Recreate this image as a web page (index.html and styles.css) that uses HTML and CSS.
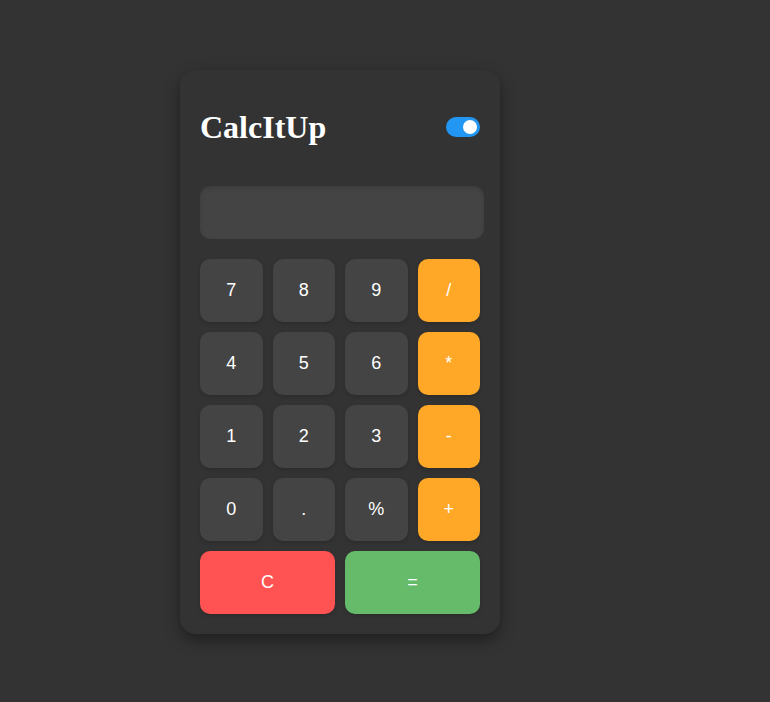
FILE: index.html
```html
<!DOCTYPE html>
<html lang="en">
<head>
<meta charset="utf-8">
<title>CalcItUp</title>
<link rel="stylesheet" href="styles.css">
</head>
<body>
<div class="calculator">
  <div class="header">
    <h1 class="title">CalcItUp</h1>
    <label class="toggle"><span class="knob"></span></label>
  </div>
  <div class="display"></div>
  <div class="keys">
    <button class="key">7</button>
    <button class="key">8</button>
    <button class="key">9</button>
    <button class="key op">/</button>
    <button class="key">4</button>
    <button class="key">5</button>
    <button class="key">6</button>
    <button class="key op">*</button>
    <button class="key">1</button>
    <button class="key">2</button>
    <button class="key">3</button>
    <button class="key op">-</button>
    <button class="key">0</button>
    <button class="key">.</button>
    <button class="key">%</button>
    <button class="key op">+</button>
    <button class="key wide clear">C</button>
    <button class="key wide equals">=</button>
  </div>
</div>
</body>
</html>
```
FILE: styles.css
```css
html {
  background: #333333;
}
body {
  margin: 0;
  padding: 70px 0 60px 180px;
  font-family: "Liberation Sans", Arial, sans-serif;
}
.calculator {
  width: 280px;
  padding: 20px;
  background: #333333;
  border-radius: 16px;
  box-shadow: 0 6px 16px rgba(0, 0, 0, 0.4);
}
.header {
  display: flex;
  justify-content: space-between;
  align-items: center;
  height: 76px;
  margin-bottom: 20px;
}
.title {
  margin: 0;
  font-family: "Liberation Serif", "Times New Roman", serif;
  font-size: 32px;
  font-weight: bold;
  color: #ffffff;
  position: relative;
  top: -1px;
}
.toggle {
  position: relative;
  width: 34px;
  height: 20px;
  border-radius: 10px;
  background: #2196f3;
  margin-top: -2px;
}
.knob {
  position: absolute;
  right: 3px;
  top: 3px;
  width: 14px;
  height: 14px;
  border-radius: 50%;
  background: #ffffff;
}
.display {
  width: 284px;
  height: 53px;
  background: #444444;
  border-radius: 10px;
  box-shadow: inset 0 2px 4px rgba(0, 0, 0, 0.12);
  margin-bottom: 20px;
}
.keys {
  display: grid;
  grid-template-columns: repeat(4, 1fr);
  grid-auto-rows: 63px;
  gap: 10px;
}
.key {
  border: none;
  border-radius: 10px;
  background: #444444;
  color: #ffffff;
  font-family: "Liberation Sans", Arial, sans-serif;
  font-size: 18px;
  padding: 0;
  box-shadow: 0 2px 4px rgba(0, 0, 0, 0.15);
}
.op {
  background: #ffa726;
}
.wide {
  grid-column: span 2;
}
.clear {
  background: #ff5252;
}
.equals {
  background: #66bb6a;
}
```
